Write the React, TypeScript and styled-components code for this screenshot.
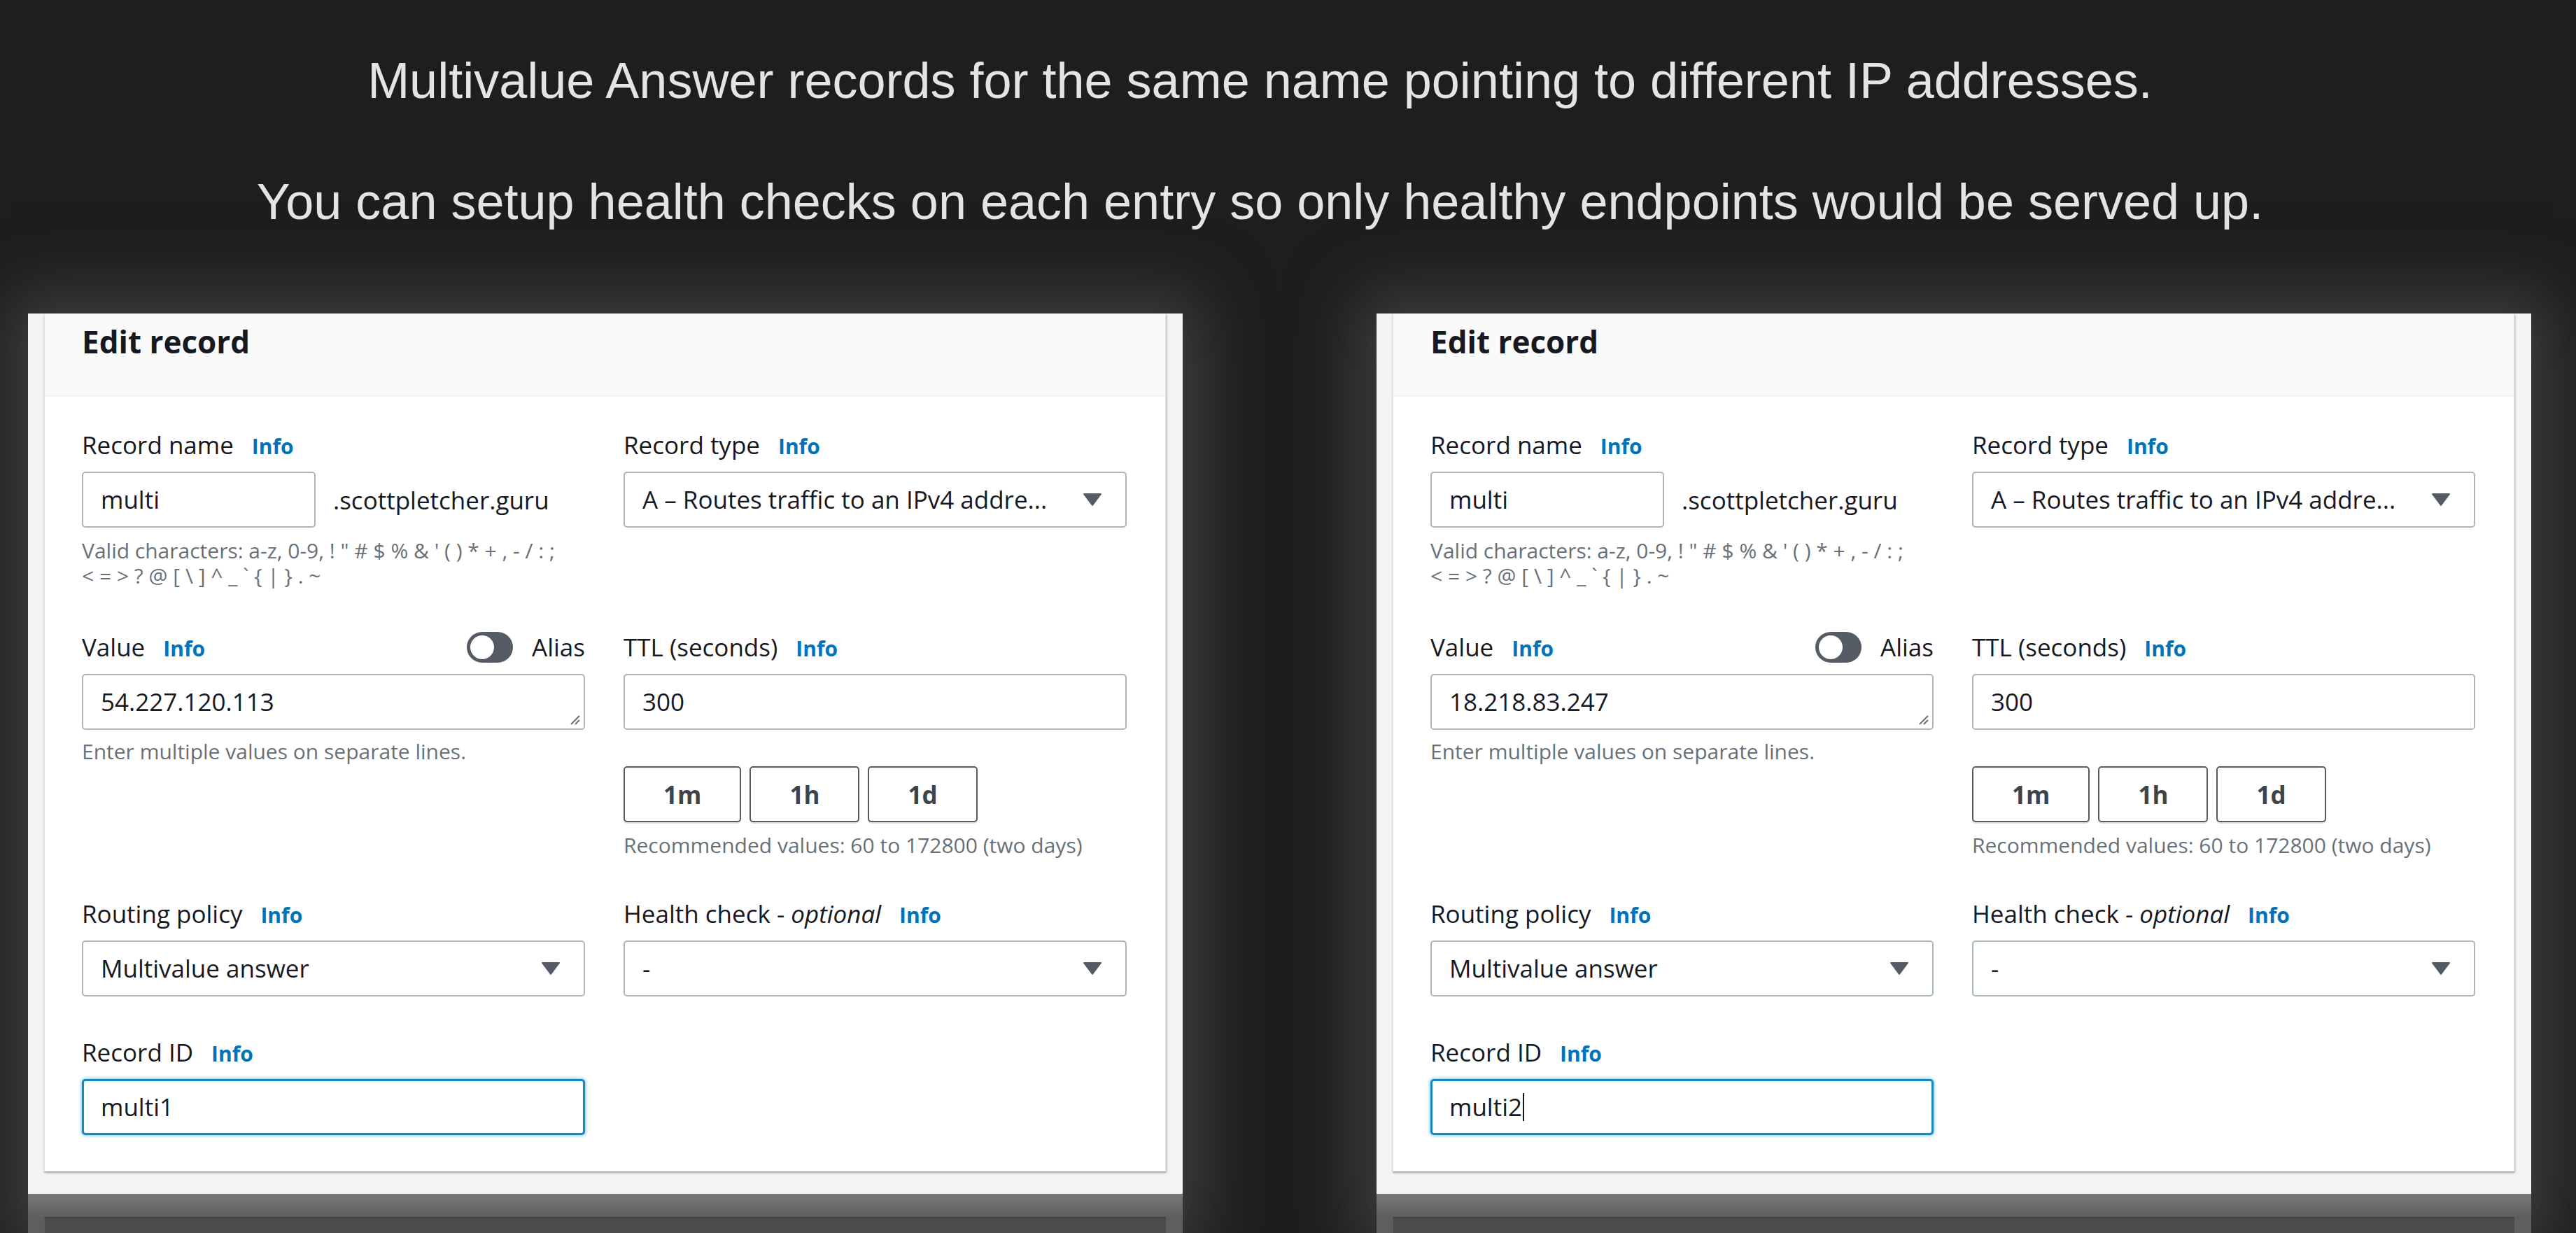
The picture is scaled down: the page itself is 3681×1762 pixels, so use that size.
import React from 'react';
import styled, { createGlobalStyle } from 'styled-components';

const Global = createGlobalStyle`
  html, body { margin: 0; padding: 0; background: #1e1e1e; overflow: hidden; }
  * { box-sizing: border-box; }
`;

const Page = styled.div`
  width: 3681px;
  height: 1762px;
  overflow: hidden;
  display: flex;
  flex-direction: column;
  background: #1e1e1e;
`;

const Caption = styled.div`
  padding: 70px 80px 0 0;
  display: flex;
  flex-direction: column;
  align-items: center;
  gap: 83px;
  font-family: "Liberation Sans", Arial, sans-serif;
  font-size: 72px;
  line-height: 90px;
  color: #e4e4e4;
`;

const CaptionLine = styled.p`
  margin: 0;
  white-space: nowrap;
`;

const Stage = styled.div`
  margin-top: 115px;
  flex: 1;
  min-height: 0;
  display: flex;
  gap: 277px;
  padding-left: 40px;
`;

const Column = styled.div`
  width: 1650px;
  display: flex;
  flex-direction: column;
  box-shadow: 0 0 90px 26px rgba(92, 92, 92, 0.55);
`;

const Frame = styled.div`
  background: #f2f3f3;
  padding: 0 24px 32px 23px;
`;

const Peek = styled.div`
  flex: 1;
  background: linear-gradient(#7a7a7a, #5e5e5e 60%);
  padding: 33px 24px 0 23px;
  display: flex;
`;

const PeekCard = styled.div`
  flex: 1;
  background: #4b4b4b;
  border-top: 2px solid #434343;
  border-left: 1px solid #5a5a5a;
`;

const Card = styled.div`
  background: #ffffff;
  border-left: 1px solid #e3e6e6;
  border-right: 1px solid #e3e6e6;
  box-shadow: 0 2px 2px rgba(0, 28, 36, 0.3), 2px 2px 2px rgba(0, 28, 36, 0.12);
  font-family: "Open Sans", "Noto Sans", sans-serif;
  color: #16191f;
`;

const CardHeader = styled.div`
  background: #fafafa;
  border-bottom: 1px solid #eaeded;
  padding: 10px 53px 47px;
  font-size: 44px;
  line-height: 60px;
  font-weight: 700;
`;

const CardBody = styled.div`
  padding: 45px 55px 52px 53px;
  display: flex;
  flex-direction: column;
`;

const Row = styled.div<{ $mt: number }>`
  margin-top: ${(p) => p.$mt}px;
  display: grid;
  grid-template-columns: 719px 719px;
  column-gap: 55px;
  align-items: start;
`;

const Field = styled.div`
  display: flex;
  flex-direction: column;
  gap: 13px;
`;

const LabelRow = styled.div`
  height: 50px;
  display: flex;
  align-items: center;
  justify-content: space-between;
`;

const LabelGroup = styled.div`
  display: flex;
  align-items: baseline;
`;

const Label = styled.span`
  font-size: 35px;
  line-height: 50px;
  color: #16191f;
  white-space: nowrap;
`;

const InfoLink = styled.span`
  margin-left: 26px;
  font-size: 30px;
  font-weight: 700;
  color: #0073bb;
`;

const AliasGroup = styled.div`
  display: flex;
  align-items: center;
  gap: 27px;
`;

const Toggle = styled.div`
  width: 66px;
  height: 44px;
  border-radius: 22px;
  background: #545b64;
  padding: 5px;
  display: flex;
`;

const Knob = styled.div`
  width: 34px;
  height: 34px;
  border-radius: 50%;
  background: #ffffff;
`;

const InputBox = styled.div<{ $width?: number; $focused?: boolean }>`
  position: relative;
  width: ${(p) => (p.$width ? `${p.$width}px` : '100%')};
  height: 80px;
  border: ${(p) => (p.$focused ? '3px solid #1a87c2' : '2px solid #aab7b8')};
  box-shadow: ${(p) => (p.$focused ? '0 0 4px 1px rgba(0, 161, 201, 0.55)' : 'none')};
  border-radius: 5px;
  background: #ffffff;
  padding: 0 ${(p) => (p.$focused ? 24 : 25)}px;
  display: flex;
  align-items: center;
  font-size: 35px;
  line-height: 50px;
  color: #16191f;
  white-space: nowrap;
`;

const SelectBox = styled(InputBox)`
  justify-content: space-between;
  padding-right: 33px;
`;

const SelectText = styled.span`
  overflow: hidden;
  text-overflow: ellipsis;
`;

const Caret = styled.span`
  display: inline-block;
  width: 2px;
  height: 40px;
  margin-left: 1px;
  background: #16191f;
`;

const ResizeHandle = styled.svg`
  position: absolute;
  right: 4px;
  bottom: 4px;
`;

const NameRow = styled.div`
  display: flex;
  align-items: center;
  gap: 25px;
`;

const Domain = styled.span`
  font-size: 35px;
  color: #16191f;
`;

const Helper = styled.div<{ $mt?: number }>`
  margin-top: ${(p) => p.$mt ?? 0}px;
  font-size: 30px;
  line-height: 36px;
  color: #687078;
  white-space: nowrap;
`;

const ButtonGroup = styled.div`
  margin-top: 39px;
  display: flex;
  gap: 12px;
`;

const TtlButton = styled.div`
  height: 80px;
  padding: 0 55px;
  border: 2px solid #545b64;
  border-radius: 5px;
  box-shadow: 0 2px 0 rgba(0, 0, 0, 0.12);
  display: flex;
  align-items: center;
  font-size: 35px;
  font-weight: 700;
  color: #3d434a;
`;

const Arrow = () => (
  <svg width="28" height="20" viewBox="0 0 28 20">
    <path d="M2 2 H26 L14 18 Z" fill="#545b64" stroke="#545b64" strokeWidth="2" strokeLinejoin="round" />
  </svg>
);

const Info = () => <InfoLink>Info</InfoLink>;

type PanelProps = { value: string; recordId: string; typing?: boolean };

const EditRecord = ({ value, recordId, typing }: PanelProps) => (
  <Column>
    <Frame>
      <Card>
        <CardHeader>Edit record</CardHeader>
        <CardBody>
          <Row $mt={0}>
            <Field>
              <LabelRow>
                <LabelGroup>
                  <Label>Record name</Label>
                  <Info />
                </LabelGroup>
              </LabelRow>
              <NameRow>
                <InputBox $width={334}>multi</InputBox>
                <Domain>.scottpletcher.guru</Domain>
              </NameRow>
              <Helper $mt={2}>
                Valid characters: a-z, 0-9, ! " # $ % &amp; ' ( ) * + , - / : ;
                <br />
                {'< = > ? @ [ \\ ] ^ _ ` { | } . ~'}
              </Helper>
            </Field>
            <Field>
              <LabelRow>
                <LabelGroup>
                  <Label>Record type</Label>
                  <Info />
                </LabelGroup>
              </LabelRow>
              <SelectBox>
                <SelectText>A – Routes traffic to an IPv4 addre...</SelectText>
                <Arrow />
              </SelectBox>
            </Field>
          </Row>

          <Row $mt={59}>
            <Field>
              <LabelRow>
                <LabelGroup>
                  <Label>Value</Label>
                  <Info />
                </LabelGroup>
                <AliasGroup>
                  <Toggle>
                    <Knob />
                  </Toggle>
                  <Label>Alias</Label>
                </AliasGroup>
              </LabelRow>
              <InputBox>
                {value}
                <ResizeHandle width="18" height="18" viewBox="0 0 18 18">
                  <path d="M16 4 L4 16 M16 10 L10 16" stroke="#687078" strokeWidth="2" />
                </ResizeHandle>
              </InputBox>
              <Helper>Enter multiple values on separate lines.</Helper>
            </Field>
            <Field>
              <LabelRow>
                <LabelGroup>
                  <Label>TTL (seconds)</Label>
                  <Info />
                </LabelGroup>
              </LabelRow>
              <InputBox>300</InputBox>
              <ButtonGroup>
                <TtlButton>1m</TtlButton>
                <TtlButton>1h</TtlButton>
                <TtlButton>1d</TtlButton>
              </ButtonGroup>
              <Helper $mt={2}>Recommended values: 60 to 172800 (two days)</Helper>
            </Field>
          </Row>

          <Row $mt={55}>
            <Field>
              <LabelRow>
                <LabelGroup>
                  <Label>Routing policy</Label>
                  <Info />
                </LabelGroup>
              </LabelRow>
              <SelectBox>
                <SelectText>Multivalue answer</SelectText>
                <Arrow />
              </SelectBox>
            </Field>
            <Field>
              <LabelRow>
                <LabelGroup>
                  <Label>
                    Health check - <em>optional</em>
                  </Label>
                  <Info />
                </LabelGroup>
              </LabelRow>
              <SelectBox>
                <SelectText>-</SelectText>
                <Arrow />
              </SelectBox>
            </Field>
          </Row>

          <Row $mt={55}>
            <Field>
              <LabelRow>
                <LabelGroup>
                  <Label>Record ID</Label>
                  <Info />
                </LabelGroup>
              </LabelRow>
              <InputBox $focused>
                {recordId}
                {typing && <Caret />}
              </InputBox>
            </Field>
          </Row>
        </CardBody>
      </Card>
    </Frame>
    <Peek>
      <PeekCard />
    </Peek>
  </Column>
);

export default function App() {
  return (
    <Page>
      <Global />
      <Caption>
        <CaptionLine>Multivalue Answer records for the same name pointing to different IP addresses.</CaptionLine>
        <CaptionLine>You can setup health checks on each entry so only healthy endpoints would be served up.</CaptionLine>
      </Caption>
      <Stage>
        <EditRecord value="54.227.120.113" recordId="multi1" />
        <EditRecord value="18.218.83.247" recordId="multi2" typing />
      </Stage>
    </Page>
  );
}
